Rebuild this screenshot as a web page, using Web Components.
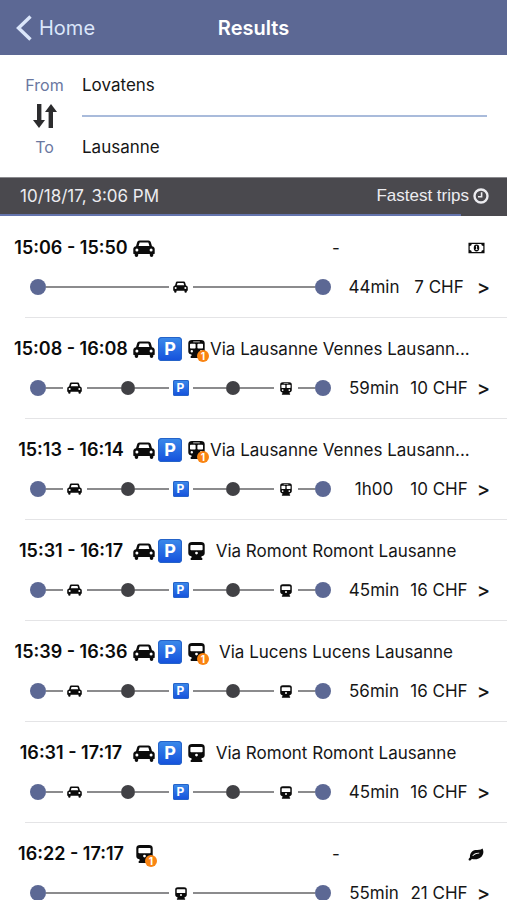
<!DOCTYPE html>
<html lang="en">
<head>
<meta charset="utf-8">
<meta name="viewport" content="width=device-width, initial-scale=1">
<title>Results</title>
<style>
  html { --brand: #5c6894; --dark: #4a494e; --orange: #f98412; }
  body { margin: 0; background: #fff; color: #161616; font: 17px/24px Inter, "Liberation Sans", sans-serif; overflow-x: hidden; }
</style>
</head>
<body>
<results-page></results-page>
<script>
const ICONS = {
  car: ['0 0 22 17', 22, 17, '<path fill-rule="evenodd" d="M6.6.4h8.8c1.3 0 2.2.8 2.5 2L19 6.2c1.6.2 2.7 1.3 2.7 2.9v4.4c0 .3-.2.5-.5.5h-.9v1.2a1.75 1.75 0 0 1-3.5 0V14H5.2v1.2a1.75 1.75 0 0 1-3.5 0V14H.8c-.3 0-.5-.2-.5-.5V9.1c0-1.6 1.1-2.7 2.7-2.9l1.1-3.8C4.4 1.2 5.3.4 6.6.4zM5.6 6.1h10.800l-.9-3.200c-.1-.3-.2-.4-.5-.4H7c-.3 0-.4.1-.5.4zM3.900 8.500a1.500 1.500 0 1 0 0 3 1.500 1.500 0 0 0 0-3zM18.100 8.500a1.500 1.500 0 1 0 0 3 1.500 1.500 0 0 0 0-3z"/>'],
  train: ['0 0 17 18', 17, 18, '<path fill-rule="evenodd" d="M4 0h9c2.200 0 3.700 1.200 3.700 3v8.200c0 1.800-1.500 3-3.700 3H4c-2.200 0-3.700-1.200-3.700-3V3C.3 1.200 1.800 0 4 0zM3.300 2.900c-.6 0-.9.3-.9.8v3.800c0 .5.300.8.9.8h10.400c.6 0 .9-.3.900-.8V3.700c0-.5-.3-.8-.9-.8zM8.500 9.700a1.400 1.400 0 1 0 0 2.800 1.400 1.400 0 0 0 0-2.800z"/><path d="M3.500 13.500h10v2.500h.8v2H2.700v-2h.8z"/>'],
  subway: ['0 0 17 18', 17, 18, '<path fill-rule="evenodd" d="M4 0h9c2.200 0 3.700 1.200 3.700 3v8.500c0 1.800-1.500 3-3.700 3H4c-2.200 0-3.700-1.200-3.700-3V3C.3 1.200 1.800 0 4 0zM5.200 1.400v.8h6.600v-.8zM2.700 3.700c-.4 0-.7.3-.7.700v3.300c0 .4.300.7.700.7h4.200c.4 0 .7-.3.700-.7V4.400c0-.4-.3-.7-.7-.7zM10.100 3.700c-.4 0-.7.3-.7.700v3.300c0 .4.300.7.700.7h4.200c.4 0 .7-.3.700-.7V4.400c0-.4-.3-.7-.7-.7zM3.800 10a1.200 1.200 0 1 0 0 2.400 1.200 1.200 0 0 0 0-2.400zM13.200 10a1.200 1.200 0 1 0 0 2.400 1.200 1.200 0 0 0 0-2.400z"/><path d="M3.500 14h10v2h.8v2H2.700v-2h.8z"/>'],
  money: ['0 0 18 12', 17, 12, '<path fill-rule="evenodd" d="M.5.5h17v11H.5zM4 1.800a2.400 2.400 0 0 1-2.200 2.200v4A2.400 2.400 0 0 1 4 10.200h10a2.400 2.400 0 0 1 2.200-2.200V4A2.400 2.400 0 0 1 14 1.800z"/><ellipse cx="9" cy="6" rx="2.900" ry="3.700"/><path fill="#fff" d="M8.100 4.400 9 3.700h.6v3.700h.7v.8H7.900v-.8h.7V4.900z"/>'],
  leaf: ['0 0 16 13', 16, 13, '<path fill-rule="evenodd" d="M14.400.4c.8 1.300 1.200 2.900.9 4.600-.6 3.800-4.200 6.300-8.100 6.300-1.200 0-2.300-.2-3.300-.4-.7.400-1.300 1.700-2.100 1.700C1 12.600.5 11.800.6 11.200c.1-.8 1-1.300 1.400-2C1.600 5.600 4 2.500 7.500 2c2.300-.4 5.200.1 6.900-1.600zM11 4.800C7.800 4.600 5.800 5.900 4.500 7.600c-.2.300.1.600.5.400 1.700-1.500 3.400-2.500 6-2.500.5 0 .5-.7 0-.7z"/>'],
  clock: ['0 0 16 16', 16, 16, '<circle cx="8" cy="8" r="6.500" fill="none" stroke="currentColor" stroke-width="2.400"/><path d="M8.600 4.300v4.500H5" fill="none" stroke="currentColor" stroke-width="1.600"/>'],
  back: ['0 0 16 26', 16, 26, '<path d="M14.500 1.500 2.500 13l12 11.500" fill="none" stroke="currentColor" stroke-width="3.400"/>'],
  swap: ['0 0 24 26', 24, 26, '<path d="M4 1h4.400v16H12l-6 8-6-8h4zM15.600 25V9H12l6-8 6 8h-4v16z"/>']
};

function define(name, render) {
  customElements.define(name, class extends HTMLElement {
    connectedCallback() {
      if (this.shadowRoot) return;
      this.attachShadow({ mode: 'open' }).innerHTML = render(this);
    }
  });
}

/* Glyph; the "small" attribute gives the timeline size. */
define('app-icon', el => {
  const [box, w, h, art] = ICONS[el.getAttribute('name')];
  const small = el.hasAttribute('small');
  const width = small ? (w > 20 ? 15 : 12) : w, height = small ? (w > 20 ? 12 : 13) : h;
  return `<style>:host{display:inline-flex;flex:none}svg{display:block;fill:currentColor}</style>
    <svg viewBox="${box}" width="${width}" height="${height}" aria-hidden="true">${art}</svg>`;
});

define('parking-sign', () => `<style>
  :host{display:flex;flex:none;align-items:center;justify-content:center;width:24px;height:24px;border-radius:4px;
    background:linear-gradient(#3c8bea,#1450dc);box-shadow:inset 0 0 0 1px #2563c8;color:#fff;font:700 18px/24px Inter,sans-serif}
  :host([small]){width:16px;height:16px;border-radius:2px;font-size:12px;line-height:16px}
  </style><span>P</span>`);

/* One transport mode in a trip's heading, with an optional count badge. */
define('trip-mode', el => {
  const mode = el.getAttribute('mode'), count = el.getAttribute('count');
  return `<style>
    :host{display:flex;flex:none;position:relative;width:26px;height:24px;align-items:center;justify-content:center;color:#0b0b0b}
    .count{position:absolute;right:0;bottom:-1px;width:12px;height:12px;border-radius:50%;background:var(--orange);color:#fff;
      font:700 10px/12px Inter,sans-serif;text-align:center}
    </style>${mode === 'parking' ? '<parking-sign></parking-sign>' : `<app-icon name="${mode}"></app-icon>`}
    ${count ? `<span class="count">${count}</span>` : ''}`;
});

define('trip-track', el => {
  const modes = el.getAttribute('modes').split(' ');
  const parts = modes.map((mode, i) => {
    const first = i === 0, last = i === modes.length - 1;
    return `${first ? '' : '<i class="stop"></i>'}<i class="line ${first ? 'outer' : ''}"></i>
      <span>${mode === 'parking' ? '<parking-sign small></parking-sign>' : `<app-icon name="${mode}" small></app-icon>`}</span>
      <i class="line ${last ? 'outer' : ''}"></i>`;
  }).join('');
  return `<style>
    :host{display:flex;align-items:center;min-width:0;color:#0b0b0b}
    .end{flex:none;width:16px;height:16px;border-radius:50%;background:var(--brand)}
    .stop{flex:none;width:14px;height:14px;border-radius:50%;background:#414145}
    .line{flex:2;height:2px;background:#8b8b8d}
    .line.outer{flex:1}
    span{flex:none;display:flex;width:24px;align-items:center;justify-content:center}
    </style><i class="end"></i>${parts}<i class="end"></i>`;
});

define('trip-row', el => {
  const a = n => el.getAttribute(n);
  const modes = a('modes').split(' ');
  return `<style>
    :host{display:block}
    .head{display:grid;grid-template-columns:114px 78px minmax(0,1fr) 28px;align-items:center;padding:19px 17px 0 14px}
    .time{font-weight:600;font-size:18px;text-align:center;white-space:nowrap;color:#0b0b0b}
    .modes{display:flex;margin-left:3px}
    .via{display:flex;justify-content:safe center;margin-left:4px;white-space:nowrap}
    .tag{display:flex;justify-content:center;color:#0b0b0b}
    .body{display:grid;grid-template-columns:minmax(0,1fr) 64px 66px 23px;align-items:center;margin-left:25px;padding:15px 12px 18px 5px;border-bottom:1px solid #e4e4e6}
    trip-track{margin-right:11px}
    .num{text-align:center;white-space:nowrap}
    a{color:inherit;text-decoration:none;text-align:center;font-size:20px;font-weight:500}
    </style>
    <div class="head"><div class="time">${a('time')}</div>
      <div class="modes">${modes.map((m, i) => `<trip-mode mode="${m}" ${a('changes') && i === modes.length - 1 ? `count="${a('changes')}"` : ''}></trip-mode>`).join('')}</div>
      <div class="via"><slot></slot></div>
      <div class="tag">${a('tag') ? `<app-icon name="${a('tag')}"></app-icon>` : ''}</div></div>
    <div class="body"><trip-track modes="${a('modes')}"></trip-track>
      <div class="num">${a('duration')}</div><div class="num">${a('price')}</div>
      <a href="#trip" aria-label="Trip details">&gt;</a></div>`;
});

define('nav-bar', () => `<style>
  :host{display:grid;grid-template-columns:1fr auto 1fr;align-items:center;height:55px;padding:0 16px;background:var(--brand);color:#fff}
  button{display:flex;align-items:center;gap:7px;justify-self:start;padding:0;border:0;background:none;color:#dbe6fa;font:inherit;font-size:20px}
  h1{margin:0;font-size:20px;line-height:24px;font-weight:600}
  </style><button type="button"><app-icon name="back"></app-icon><span>Home</span></button><h1><slot></slot></h1>`);

define('route-form', () => `<style>
  :host{display:block}
  form{display:grid;grid-template-columns:49px minmax(0,1fr);grid-template-rows:30px 32px 30px;column-gap:13px;align-items:center;padding:15px 20px}
  label{color:#6a779f;font-size:16px;text-align:center}
  input{width:100%;padding:0;border:0;outline:0;background:none;color:#161616;font:inherit}
  button{display:flex;justify-content:center;padding:0;border:0;background:none;color:#2c2c2e}
  hr{width:100%;margin:0;border:0;height:2px;background:#a9bbdb}
  </style><form>
  <label for="from">From</label><input id="from" value="Lovatens">
  <button type="button" aria-label="Swap"><app-icon name="swap"></app-icon></button><hr>
  <label for="to">To</label><input id="to" value="Lausanne"></form>`);

define('sort-bar', () => `<style>
  :host{display:block;background:var(--dark);color:#ececf0;border-top:1px solid #8a8a8e}
  .row{display:flex;justify-content:space-between;align-items:center;height:36px;padding:0 18px 0 20px}
  button{display:flex;align-items:center;gap:4px;padding:0;border:0;background:none;color:inherit;font:17px/24px "Liberation Sans",sans-serif}
  .bar{width:91%;height:2px;background:#6474ad}
  </style><div class="row"><time>10/18/17, 3:06 PM</time><button type="button">Fastest trips<app-icon name="clock"></app-icon></button></div>
  <div class="bar" role="progressbar" aria-label="Search" aria-valuenow="91"></div>`);

define('results-page', () => `<style>:host{display:block}main{display:block;padding-top:1px}</style>
  <nav-bar>Results</nav-bar>
  <route-form></route-form>
  <sort-bar></sort-bar>
  <main>
    <trip-row time="15:06 - 15:50" modes="car" tag="money" duration="44min" price="7 CHF">-</trip-row>
    <trip-row time="15:08 - 16:08" modes="car parking subway" changes="1" duration="59min" price="10 CHF">Via Lausanne Vennes Lausann...</trip-row>
    <trip-row time="15:13 - 16:14" modes="car parking subway" changes="1" duration="1h00" price="10 CHF">Via Lausanne Vennes Lausann...</trip-row>
    <trip-row time="15:31 - 16:17" modes="car parking train" duration="45min" price="16 CHF">Via Romont Romont Lausanne</trip-row>
    <trip-row time="15:39 - 16:36" modes="car parking train" changes="1" duration="56min" price="16 CHF">Via Lucens Lucens Lausanne</trip-row>
    <trip-row time="16:31 - 17:17" modes="car parking train" duration="45min" price="16 CHF">Via Romont Romont Lausanne</trip-row>
    <trip-row time="16:22 - 17:17" modes="train" changes="1" tag="leaf" duration="55min" price="21 CHF">-</trip-row>
  </main>`);
</script>
</body>
</html>
